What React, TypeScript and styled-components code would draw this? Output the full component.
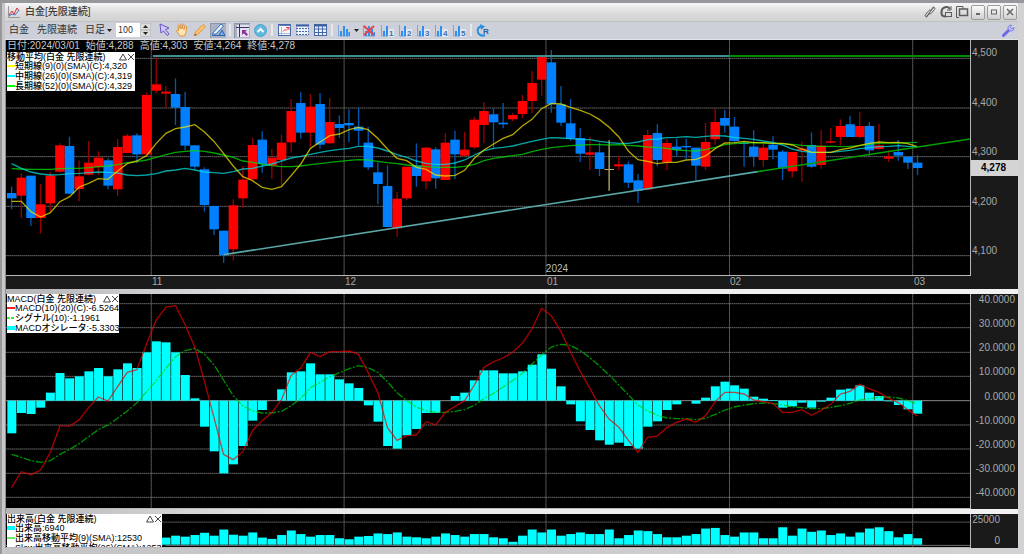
import React from 'react';
import styled, { createGlobalStyle } from 'styled-components';

const GlobalStyle = createGlobalStyle`
  * { box-sizing: border-box; }
  body {
    margin: 0;
    background: #c4c4c6;
    font-family: 'Liberation Sans', 'Noto Sans CJK JP', sans-serif;
    font-size: 10px;
    line-height: 12px;
  }
  button, input, select { font: inherit; color: inherit; margin: 0; padding: 0; border: 0; background: none; }
`;

/* ---------- chart data (chart units, three per pixel at base size) ---------- */

type Candle = [number, number, number, number, 'R' | 'B' | 'Y'];

const STEP = 28.93;
const centre = (i: number) => 17 + i * STEP;

const CANDLES: Candle[] = [
  [440, 459, 475, 508, 'B'], [400, 413, 467, 535, 'R'], [407, 407, 534, 558, 'B'], [432, 493, 534, 581, 'R'],
  [395, 407, 490, 515, 'R'], [310, 316, 395, 398, 'R'], [290, 318, 461, 463, 'B'], [361, 409, 447, 484, 'R'],
  [304, 368, 404, 406, 'R'], [334, 353, 382, 405, 'R'], [355, 361, 437, 448, 'B'], [297, 321, 448, 468, 'R'],
  [282, 287, 339, 339, 'R'], [280, 286, 343, 370, 'B'], [157, 165, 343, 345, 'R'], [52, 133, 152, 160, 'R'],
  [138, 155, 161, 204, 'R'], [115, 162, 203, 255, 'B'], [155, 201, 317, 331, 'B'], [316, 316, 380, 388, 'B'],
  [382, 388, 495, 515, 'B'], [497, 498, 568, 585, 'B'], [572, 572, 646, 669, 'B'], [478, 496, 628, 662, 'R'],
  [378, 419, 475, 503, 'R'], [294, 315, 418, 418, 'R'], [274, 299, 372, 398, 'B'], [327, 353, 377, 417, 'R'],
  [284, 308, 360, 437, 'R'], [178, 213, 307, 338, 'R'], [157, 189, 278, 296, 'B'], [162, 200, 278, 320, 'R'],
  [159, 192, 314, 326, 'B'], [174, 246, 310, 310, 'R'], [226, 252, 264, 293, 'B'], [208, 249, 256, 306, 'B'],
  [202, 260, 272, 317, 'B'], [261, 308, 382, 390, 'B'], [367, 397, 432, 493, 'B'], [376, 438, 561, 561, 'B'],
  [456, 476, 565, 590, 'R'], [380, 380, 475, 481, 'R'], [310, 376, 408, 440, 'B'], [322, 323, 424, 448, 'R'],
  [322, 328, 415, 446, 'B'], [280, 308, 420, 421, 'R'], [272, 299, 343, 417, 'B'], [276, 329, 347, 347, 'R'],
  [230, 239, 322, 327, 'R'], [186, 213, 255, 310, 'R'], [205, 223, 247, 326, 'B'], [189, 248, 253, 265, 'B'],
  [219, 225, 238, 244, 'R'], [165, 183, 222, 234, 'R'], [93, 129, 183, 219, 'R'], [45, 45, 119, 167, 'R'],
  [30, 67, 193, 218, 'B'], [138, 193, 248, 257, 'B'], [177, 250, 296, 302, 'B'], [264, 294, 341, 366, 'B'],
  [290, 337, 344, 391, 'R'], [308, 337, 387, 408, 'B'], [301, 387, 390, 452, 'Y'], [347, 373, 379, 391, 'R'],
  [364, 373, 428, 444, 'B'], [402, 421, 452, 489, 'B'], [270, 285, 448, 448, 'R'], [253, 279, 360, 379, 'B'],
  [298, 309, 367, 391, 'R'], [296, 320, 329, 349, 'B'], [296, 318, 322, 357, 'B'], [323, 323, 377, 420, 'B'],
  [249, 306, 380, 390, 'R'], [204, 246, 298, 314, 'R'], [210, 234, 257, 278, 'B'], [231, 260, 303, 306, 'B'],
  [303, 308, 312, 380, 'B'], [270, 320, 350, 380, 'B'], [312, 323, 360, 380, 'R'], [289, 314, 329, 358, 'B'],
  [330, 335, 386, 420, 'B'], [335, 336, 394, 413, 'R'], [304, 326, 332, 425, 'R'], [277, 315, 380, 384, 'B'],
  [270, 317, 375, 386, 'R'], [263, 304, 308, 310, 'R'], [238, 258, 291, 317, 'R'], [227, 253, 291, 291, 'B'],
  [215, 258, 291, 295, 'R'], [246, 258, 331, 348, 'B'], [251, 316, 327, 329, 'R'], [331, 350, 356, 366, 'R'],
  [299, 336, 347, 362, 'B'], [350, 350, 368, 387, 'B'], [346, 368, 384, 405, 'B'],
];

const SHORT_MA = [
  484, 484, 515, 531, 518, 485, 470, 441, 430, 416, 418, 393, 371, 363, 347, 310, 280, 266, 261, 254, 276, 305, 340, 378,
  410, 422, 442, 448, 440, 407, 372, 325, 306, 287, 282, 269, 262, 269, 295, 327, 355, 362, 382, 388, 405, 408, 406, 391, 355,
  330, 312, 295, 284, 258, 238, 206, 190, 192, 202, 211, 222, 239, 262, 291, 334, 359, 364, 371, 367, 367, 360,
  358, 348, 326, 309, 308, 304, 308, 308, 310, 310, 315, 327, 337, 337, 337, 329, 324, 316, 310, 306, 308, 307, 311, 320,
];
const MIDDLE_MA = [
  371, 385, 396, 402, 405, 404, 401, 400, 398, 396, 397, 399, 405, 407, 405, 401, 393, 390, 385, 390, 396, 398, 400, 395,
  387, 385, 378, 372, 363, 354, 349, 343, 337, 332, 328, 325, 319, 319, 324, 333, 344, 352, 363, 370, 373, 373, 369, 360, 345,
  332, 325, 322, 318, 311, 304, 298, 293, 294, 296, 298, 299, 304, 308, 310, 310, 306, 299, 297, 293, 292, 290,
  292, 289, 287, 288, 292, 295, 298, 303, 307, 315, 327, 334, 337, 337, 337, 334, 331, 326, 323, 320, 319, 317, 319, 320,
];
const LONG_MA = [
  386, 387, 388, 388, 388, 386, 385, 385, 383, 380, 378, 374, 368, 365, 360, 352, 344, 337, 334, 332, 334, 339, 345, 352,
  363, 367, 372, 377, 380, 380, 378, 374, 371, 367, 364, 361, 359, 360, 364, 368, 371, 375, 378, 380, 382, 382, 382, 379, 373,
  362, 355, 351, 347, 343, 335, 328, 323, 320, 317, 315, 314, 314, 315, 314, 316, 318, 321, 322, 325, 330, 332,
  333, 329, 322, 314, 311, 309, 308, 309, 310, 311, 313, 316, 318, 319, 319, 320, 319, 317, 313, 310, 309, 309, 308, 307,
];

const OSCILLATOR = [
  445, 384, 387, 368, 323, 264, 280, 274, 259, 249, 274, 253, 235, 249, 202, 169, 172, 202, 270, 340, 425, 499, 565, 538,
  483, 407, 375, 347, 313, 262, 259, 235, 268, 268, 283, 295, 309, 361, 410, 483, 491, 451, 432, 384, 384, 347, 333, 323,
  286, 256, 256, 265, 265, 259, 239, 208, 251, 304, 358, 409, 435, 466, 479, 473, 483, 491, 425, 409, 375, 358, 347, 356,
  338, 304, 290, 301, 311, 335, 341, 345, 368, 364, 353, 368, 350, 338, 314, 311, 301, 323, 333, 349, 360, 373, 386,
].map((v) => v - 27);
const MACD = [
  608, 560, 569, 555, 502, 422, 424, 404, 368, 336, 348, 305, 262, 254, 177, 105, 66, 62, 120, 187, 290, 400, 508, 524,
  500, 437, 407, 383, 344, 271, 249, 202, 215, 200, 200, 198, 208, 263, 322, 428, 466, 452, 450, 410, 420, 382, 364, 347,
  300, 247, 230, 219, 202, 175, 132, 70, 92, 140, 202, 260, 310, 363, 403, 427, 467, 502, 457, 453, 428, 412, 402, 412,
  392, 350, 322, 322, 327, 345, 350, 355, 382, 382, 374, 391, 376, 358, 327, 319, 298, 312, 322, 340, 353, 374, 393,
].map((v) => v - 27);
const SIGNAL = [
  508, 517, 527, 532, 527, 508, 493, 476, 455, 434, 420, 400, 378, 353, 320, 287, 250, 215, 197, 190, 208, 240, 285, 332,
  363, 378, 384, 384, 379, 362, 340, 308, 292, 276, 263, 251, 242, 248, 262, 290, 323, 347, 366, 377, 382, 382, 379, 374,
  361, 340, 325, 306, 287, 265, 237, 210, 186, 178, 181, 197, 218, 243, 270, 300, 330, 360, 378, 391, 399, 401, 401, 404,
  400, 388, 375, 366, 360, 356, 354, 356, 360, 365, 368, 371, 371, 367, 362, 355, 345, 341, 337, 336, 339, 347, 356,
].map((v) => v - 27);
const VOLUME = [
  752, 755, 750, 757, 748, 752, 744, 756, 752, 750, 755, 748, 757, 752, 756, 755, 760, 754, 757, 752, 745, 754, 735, 751,
  754, 744, 760, 764, 752, 738, 749, 757, 752, 752, 762, 765, 757, 755, 747, 749, 744, 757, 759, 762, 757, 747, 752, 757,
  749, 749, 759, 762, 773, 754, 735, 744, 735, 754, 749, 744, 749, 749, 735, 762, 752, 738, 740, 749, 759, 759, 754, 749,
  732, 730, 752, 757, 744, 744, 762, 762, 728, 754, 732, 742, 738, 752, 747, 757, 744, 732, 728, 740, 759, 749, 762,
].map((v) => v - 687);

const MONTH_LINES = [436, 1015, 1621, 2172, 2722];
const PLOT_W = 2894;

const toPoints = (values: number[]) => values.map((v, i) => `${Math.round(centre(i))},${v}`).join(' ');

/* ---------- window frame ---------- */

const Window = styled.main`
  display: flex;
  flex-direction: column;
  min-height: 100vh;
  border-top: 3px solid #96989c;
  border-left: 2px solid #98989a;
  padding: 0 6px 6px 3px;
  background: linear-gradient(90deg, #c9c9cb, #c4c4c6 4px, #d2d2d4);
`;

const TitleBar = styled.header`
  display: flex;
  align-items: center;
  height: 18px;
  padding: 0 1px 0 3px;
  gap: 5px;
  background: linear-gradient(#f6f6f6, #dadada 60%, #d2d2d2);
`;

const Title = styled.h1`
  flex: 1;
  margin: 0;
  font-size: 10px;
  line-height: 12px;
  font-weight: 500;
  color: #3a3a3a;
`;

const TitleTools = styled.div`
  display: flex;
  align-items: center;
  gap: 2px;
`;

const PlainTool = styled.button`
  display: flex;
  width: 14px;
  height: 14px;
  color: #5c5c5c;
`;

const FrameButton = styled.button`
  display: flex;
  align-items: center;
  justify-content: center;
  width: 14px;
  height: 15px;
  border: 1px solid #9c9c9c;
  border-radius: 2px;
  background: linear-gradient(#fafafa, #cfcfcf);
  color: #666;
`;

const Toolbar = styled.nav`
  display: flex;
  align-items: center;
  height: 19px;
  padding: 0 2px 1px 4px;
  gap: 2px;
  background: #cdd0d9;
  border-top: 1px solid #bfc1c6;
  border-bottom: 1px solid #e4e5ea;
  color: #333;
`;

const TextTool = styled.button`
  margin-right: 6px;
  white-space: nowrap;
`;

const PeriodSelect = styled.select`
  appearance: none;
  width: 20px;
  line-height: 12px;
`;

const CountBox = styled.div`
  display: flex;
  width: 35px;
  height: 14px;
  margin: 0 3px 0 2px;
  background: #fff;
`;

const CountInput = styled.input`
  width: 24px;
  padding-left: 2px;
  background: #fff;
  font-family: 'Liberation Sans Narrow', 'Noto Sans CJK JP', sans-serif;
  font-size: 9px;
`;

const Spinner = styled.div`
  display: flex;
  flex-direction: column;
  flex: 1;
  background: #dcdcdc;
`;

const SpinButton = styled.button`
  display: flex;
  flex: 1;
  align-items: center;
  justify-content: center;
  border: 1px solid #c4c4c4;
`;

const IconTool = styled.button<{ $pressed?: boolean }>`
  display: flex;
  align-items: center;
  justify-content: center;
  width: 16px;
  height: 15px;
  flex: none;
  background: ${(p) => (p.$pressed ? '#a9b1c2' : 'none')};
  box-shadow: ${(p) => (p.$pressed ? 'inset 1px 1px 0 #8d95a8' : 'none')};
`;

const Divider = styled.span`
  width: 2px;
  height: 12px;
  margin: 0 1px;
  background: #e6e8ee;
`;

const Spacer = styled.span`
  flex: 1;
`;

/* ---------- chart panels ---------- */

const Panels = styled.section`
  display: grid;
  flex: 1;
  grid-template-rows: 249fr 215fr 34fr;
  gap: 5px;
  background: linear-gradient(90deg, #b4b4b6, #e9e9eb 30%, #f2f2f3);
  border-left: 1px solid #8f8f91;
`;

const Panel = styled.article`
  display: grid;
  grid-template-columns: minmax(0, 1fr) 47px;
  min-height: 0;
  background: #1a1a1a;
  overflow: hidden;
`;

const PlotColumn = styled.div`
  display: flex;
  flex-direction: column;
  min-height: 0;
`;

const Plot = styled.div`
  position: relative;
  flex: 1;
  min-height: 0;
  background: #000;
  border-right: 1px solid #b8b8b8;
  border-bottom: 1px solid #b8b8b8;
  overflow: hidden;
`;

const ChartSvg = styled.svg`
  position: absolute;
  inset: 0;
  width: 100%;
  height: 100%;
`;

const Quote = styled.p`
  position: absolute;
  left: 1px;
  top: 0;
  display: flex;
  gap: 6px;
  margin: 0;
  color: #c8c8c8;
  white-space: nowrap;
`;

const Legend = styled.div<{ $top: number; $width: number }>`
  position: absolute;
  left: 1px;
  top: ${(p) => p.$top}px;
  width: ${(p) => p.$width}px;
  background: #fff;
  color: #000;
  font-size: 9px;
  font-weight: 500;
  line-height: 10px;
  white-space: nowrap;
`;

const LegendHead = styled.div`
  display: flex;
  align-items: center;
  height: 9px;
`;

const LegendName = styled.span`
  flex: 1;
`;

const LegendButton = styled.button`
  display: flex;
  width: 8px;
  height: 8px;
`;

const LegendRow = styled.div`
  display: flex;
  align-items: center;
  height: 10px;
`;

const Swatch = styled.span<{ $color: string; $kind?: 'dash' | 'bar' }>`
  flex: none;
  width: 8px;
  height: ${(p) => (p.$kind === 'bar' ? 4 : 2)}px;
  background: ${(p) =>
    p.$kind === 'dash' ? `repeating-linear-gradient(90deg, ${p.$color} 0 3px, #fff 3px 4px)` : p.$color};
`;

const YearMark = styled.span`
  position: absolute;
  left: 56%;
  bottom: 0;
  color: #bbb;
`;

const MonthAxis = styled.div`
  display: grid;
  grid-template-columns: 146fr 193fr 202fr 183fr 184fr 57fr;
  height: 13px;
  line-height: 11px;
  color: #a8a8a8;
`;

const ValueAxis = styled.div<{ $top: number; $bottom: number; $right?: number }>`
  position: relative;
  display: flex;
  flex-direction: column;
  justify-content: space-between;
  align-items: ${(p) => (p.$right === undefined ? 'flex-start' : 'flex-end')};
  padding: ${(p) => `${p.$top}px ${p.$right ?? 0}px ${p.$bottom}px 1px`};
  color: #a8a8a8;
`;

const LastPrice = styled.strong`
  position: absolute;
  left: 0;
  right: 0;
  top: 48.2%;
  height: 16px;
  padding-left: 10px;
  background: #d4d4d4;
  color: #000;
  line-height: 16px;
`;

/* ---------- toolbar drawings ---------- */

const BarsIcon = ({ mark, cross }: { mark?: string; cross?: boolean }) => (
  <svg width="14" height="13" viewBox="0 0 14 13">
    <path d="M1.5 1v11H13" stroke="#7fa6d8" fill="none" />
    <path d="M3 12V7h2v5zM6 12V2h2v10zM9 12V5h2v7zM11.500 12V8h1.500v4z" fill="#2f8ef0" />
    {mark && <rect x="8" y="5" width="6" height="8" fill="#dfe6f2" />}
    {mark && <text x="9" y="12" fontSize="8" fontWeight="700" fill="#3f6fae" fontFamily="Liberation Sans, sans-serif">{mark}</text>}
    {cross && <path d="M2 2l10 9M12 2L2 11" stroke="#e8434a" strokeWidth="2" />}
  </svg>
);

const GridIcon = ({ dotted }: { dotted?: boolean }) => (
  <svg width="13" height="12" viewBox="0 0 13 12">
    <rect x="0.500" y="0.500" width="12" height="11" fill="#eef3fb" stroke={dotted ? '#a9bbdc' : '#4667a8'} />
    <path d="M0 1.500h13" stroke="#3b5c9e" strokeWidth="2" />
    {dotted
      ? <path d="M0 4.500h13M0 7.500h13M0 10.500h13" stroke="#4667a8" strokeDasharray="2 1" />
      : <path d="M0 5h13M0 8.500h13M4.500 0v12M8.500 0v12" stroke="#4667a8" />}
  </svg>
);

const TOOL_DRAWINGS = {
  pointer: (
    <svg width="13" height="14" viewBox="0 0 13 14">
      <path d="M2 1l9 4-3.500 1.500L11 11l-2 1.500-3.500-4.500L3 10z" fill="#cfc8f6" stroke="#6a55c0" />
    </svg>
  ),
  hand: (
    <svg width="14" height="14" viewBox="0 0 14 14">
      <path d="M5 13L1.500 8c0-1 1-1.300 2-.3L3 3c0-1 1.300-1 1.500 0L5 6l.3-4.500c.2-1 1.400-1 1.500 0L7 6l.8-4c.3-1 1.500-.7 1.400.3L9 6.500l1.300-3c.5-.8 1.600-.3 1.400.6L11 9.500 9.500 13z" fill="#ffe3b0" stroke="#dd9440" />
    </svg>
  ),
  pencil: (
    <svg width="14" height="14" viewBox="0 0 14 14">
      <path d="M1.500 12.500l1-3.500L10 1.500l2.500 2.200L5 11.300z" fill="#ffc36b" stroke="#df9440" />
      <path d="M1 13l1-2.500L3.500 12z" fill="#8a5a30" />
    </svg>
  ),
  draw: (
    <svg width="15" height="14" viewBox="0 0 15 14">
      <path d="M1 11L10 1l2.500 2L5 11z" fill="#e9f1fc" stroke="#3571b8" />
      <path d="M1 12.500h8" stroke="#2d65b5" />
      <path d="M8 12.500l3-5.500 3 5.500z" stroke="#2d65b5" fill="#78a8e6" />
    </svg>
  ),
  cross: (
    <svg width="13" height="13" viewBox="0 0 13 13">
      <rect x="1" y="1" width="12" height="12" fill="#e5e2ef" />
      <path d="M3.500 0v13M0 3.500h13" stroke="#3d2f73" />
      <path d="M6 6h5l-1.700 1.700L12 10.500 10.500 12 7.700 9.300 6 11z" fill="#87329a" />
    </svg>
  ),
  up: (
    <svg width="13" height="13" viewBox="0 0 13 13">
      <circle cx="6.500" cy="6.500" r="6" fill="#5fb9e0" stroke="#4ba3cc" />
      <path d="M3.500 8l3-3 3 3" stroke="#fff" strokeWidth="2" fill="none" />
    </svg>
  ),
  panel: (
    <svg width="13" height="12" viewBox="0 0 13 12">
      <rect x="0.500" y="0.500" width="12" height="11" fill="#f7f8fc" stroke="#4667a8" />
      <path d="M0 1.500h13" stroke="#5d7fc0" />
      <path d="M3.500 3v8M1 9.500h11" stroke="#a9bbdc" />
      <path d="M5 7.500l2-2 1 1 3-3M8 3.500h3V6" stroke="#e8434a" fill="none" />
    </svg>
  ),
  refresh: (
    <svg width="14" height="13" viewBox="0 0 14 13">
      <path d="M5 2.500C1 3 1 8 3 10s4 2 6 1" stroke="#2a8fdc" strokeWidth="2" fill="none" />
      <path d="M4 0l5 2.500L5 6z" fill="#2a8fdc" />
      <text x="7" y="10" fontSize="8" fontWeight="700" fill="#245fae" fontFamily="Liberation Sans, sans-serif">R</text>
    </svg>
  ),
  wrench: (
    <svg width="13" height="13" viewBox="0 0 13 13">
      <path d="M1.500 11.500l5-5" stroke="#6c66ea" strokeWidth="3" strokeLinecap="round" />
      <path d="M9.500 1.200C7 .8 5.300 3 6.300 5.200L8 6.800c2.200.8 4.300-.8 4-3.300L10 5 8.300 3.500z" fill="#c3c4f8" stroke="#7b78e8" />
    </svg>
  ),
};

const Caret = () => (
  <svg width="5" height="3" viewBox="0 0 5 3" aria-hidden="true"><path d="M0 0h5L2.500 3z" fill="#222" /></svg>
);

const LegendControls = () => (
  <>
    <LegendButton aria-label="折りたたむ">
      <svg width="8" height="8" viewBox="0 0 8 8"><path d="M4 1L7.500 7h-7z" stroke="#444" fill="none" /></svg>
    </LegendButton>
    <LegendButton aria-label="閉じる">
      <svg width="8" height="8" viewBox="0 0 8 8"><path d="M1 1l6 6M7 1L1 7" stroke="#444" /></svg>
    </LegendButton>
  </>
);

/* ---------- chart drawings ---------- */

const GridLines = ({ rows, height }: { rows: number[]; height: number }) => (
  <g stroke="#646464" strokeWidth="3">
    {rows.map((y) => <path key={y} d={`M0 ${y}H${PLOT_W}`} strokeDasharray="5 1" />)}
    {MONTH_LINES.map((x) => <path key={x} d={`M${x} 0V${height}`} strokeDasharray="5 1" />)}
  </g>
);

const BODY = { R: '#ff0000', B: '#0080ff', Y: '#b8b060' };
const WICK = { R: '#990000', B: '#0058b0', Y: '#b8b060' };

const PriceChart = () => (
  <ChartSvg viewBox={`0 0 ${PLOT_W} 705`} preserveAspectRatio="none" role="img" aria-label="ローソク足">
    <GridLines rows={[55, 204, 350, 499, 647]} height={705} />
    {CANDLES.map(([high, top, bottom, low, tone], i) => {
      const x = centre(i);
      return (
        <g key={i}>
          <path d={`M${x} ${high}V${low}`} stroke={WICK[tone]} strokeWidth="4" />
          <rect x={x - 14} y={top} width="28.500" height={Math.max(bottom - top, 3)} fill={BODY[tone]} />
        </g>
      );
    })}
    <g fill="none" strokeWidth="4" strokeOpacity="0.75">
      <polyline points={toPoints(LONG_MA)} stroke="#00dd00" />
      <polyline points={toPoints(MIDDLE_MA)} stroke="#00dddd" />
      <polyline points={toPoints(SHORT_MA)} stroke="#eedd00" />
    </g>
    <g fill="none" strokeWidth="5">
      <path d="M441 48H2172" stroke="#3f8f8f" strokeWidth="6" />
      <path d="M2172 48H2894" stroke="#008a00" strokeWidth="6" />
      <path d="M654 644L2257 395" stroke="#5aa8a8" />
      <path d="M2257 395L2894 297" stroke="#00a000" />
    </g>
  </ChartSvg>
);

const MacdChart = () => (
  <ChartSvg viewBox={`0 0 ${PLOT_W} 642`} preserveAspectRatio="none" role="img" aria-label="MACD">
    <GridLines rows={[29, 101, 175, 247, 393, 465, 538, 610]} height={642} />
    <path d={`M0 320H${PLOT_W}`} stroke="#8a8a8a" strokeWidth="3" />
    {OSCILLATOR.map((v, i) => (
      <rect key={i} x={centre(i) - 13} y={Math.min(v, 320)} width="27" height={Math.abs(v - 320)} fill="#00ffff" />
    ))}
    <g fill="none" strokeWidth="4" strokeOpacity="0.7">
      <polyline points={toPoints(SIGNAL)} stroke="#00cc00" strokeDasharray="22 5 6 5" />
      <polyline points={toPoints(MACD)} stroke="#ee0000" />
    </g>
  </ChartSvg>
);

const VolumeChart = () => (
  <ChartSvg viewBox={`0 0 ${PLOT_W} 102`} preserveAspectRatio="none" role="img" aria-label="出来高">
    <GridLines rows={[25]} height={102} />
    {VOLUME.map((v, i) => (
      <rect key={i} x={centre(i) - 13} y={v} width="27" height={95 - v} fill="#00ffff" />
    ))}
    <path d={`M0 97H${PLOT_W}`} stroke="#707070" strokeWidth="3" />
  </ChartSvg>
);

export default function App() {
  return (
    <>
      <GlobalStyle />
      <Window>
        <TitleBar>
          <svg width="12" height="12" viewBox="0 0 12 12" aria-hidden="true">
            <path d="M0.500 0v11.500H12" stroke="#999" fill="none" />
            <path d="M1 9l3-4 2 3 3-6 2 3" stroke="#d8343c" fill="none" />
            <path d="M1 10l3-2 3 1 4-5" stroke="#4b74c8" fill="none" />
          </svg>
          <Title>白金[先限連続]</Title>
          <TitleTools>
            <PlainTool aria-label="リンク">
              <svg width="14" height="14" viewBox="0 0 14 14" fill="none" stroke="currentColor">
                <path d="M6 8.500L4 11c-1.500 1-2.500 0-1.500-1.500L6 5.500c1-1 2-.5 2 .5M8 5.500L10 3c1.500-1 2.500 0 1.500 1.500L8 8.500c-1 1-2 .5-2-.5M3.500 12.500l7-11" />
              </svg>
            </PlainTool>
            <PlainTool aria-label="更新">
              <svg width="14" height="14" viewBox="0 0 14 14" fill="none" stroke="currentColor">
                <path d="M11 4C9 1 3 1.500 2.500 6.500S5 11.500 7 11.500" strokeWidth="2" />
                <path d="M12 1v4H8" />
                <rect x="6.500" y="7.500" width="6" height="4" />
              </svg>
            </PlainTool>
            <PlainTool aria-label="別ウィンドウ">
              <svg width="14" height="14" viewBox="0 0 14 14" fill="none" stroke="currentColor">
                <path d="M4 12.500H1.500v-11H8V4" />
                <rect x="4.500" y="4" width="8" height="6.500" strokeWidth="1.500" />
              </svg>
            </PlainTool>
            <FrameButton aria-label="最小化">
              <svg width="8" height="8" viewBox="0 0 8 8"><path d="M2 6h4" stroke="currentColor" strokeWidth="2" /></svg>
            </FrameButton>
            <FrameButton aria-label="最大化">
              <svg width="8" height="8" viewBox="0 0 8 8"><rect x="1.500" y="2" width="5" height="4" fill="none" stroke="currentColor" /></svg>
            </FrameButton>
            <FrameButton aria-label="閉じる">
              <svg width="8" height="8" viewBox="0 0 8 8"><path d="M1 1l6 6M7 1L1 7" stroke="currentColor" strokeWidth="1.500" /></svg>
            </FrameButton>
          </TitleTools>
        </TitleBar>

        <Toolbar>
          <TextTool>白金</TextTool>
          <TextTool>先限連続</TextTool>
          <PeriodSelect aria-label="足種" defaultValue="日足">
            <option>日足</option>
          </PeriodSelect>
          <Caret />
          <CountBox>
            <CountInput aria-label="表示本数" defaultValue="100" />
            <Spinner>
              <SpinButton aria-label="増やす">
                <svg width="5" height="3" viewBox="0 0 5 3"><path d="M0 3h5L2.500 0z" fill="#222" /></svg>
              </SpinButton>
              <SpinButton aria-label="減らす"><Caret /></SpinButton>
            </Spinner>
          </CountBox>
          <IconTool aria-label="選択">{TOOL_DRAWINGS.pointer}</IconTool>
          <IconTool aria-label="移動">{TOOL_DRAWINGS.hand}</IconTool>
          <IconTool aria-label="ペン">{TOOL_DRAWINGS.pencil}</IconTool>
          <IconTool aria-label="描画" $pressed>{TOOL_DRAWINGS.draw}</IconTool>
          <Divider />
          <IconTool aria-label="十字カーソル" $pressed>{TOOL_DRAWINGS.cross}</IconTool>
          <IconTool aria-label="上へ">{TOOL_DRAWINGS.up}</IconTool>
          <Divider />
          <IconTool aria-label="チャート設定">{TOOL_DRAWINGS.panel}</IconTool>
          <IconTool aria-label="横罫線"><GridIcon dotted /></IconTool>
          <IconTool aria-label="罫線"><GridIcon /></IconTool>
          <Divider />
          <IconTool aria-label="テクニカル"><BarsIcon /></IconTool>
          <Caret />
          <IconTool aria-label="テクニカル削除"><BarsIcon cross /></IconTool>
          {['1', '2', '3', '4', '5'].map((n) => (
            <IconTool key={n} aria-label={`テクニカル${n}`}><BarsIcon mark={n} /></IconTool>
          ))}
          <Divider />
          <IconTool aria-label="再読込">{TOOL_DRAWINGS.refresh}</IconTool>
          <Spacer />
          <IconTool aria-label="設定">{TOOL_DRAWINGS.wrench}</IconTool>
        </Toolbar>

        <Panels>
          <Panel>
            <PlotColumn>
              <Plot>
                <PriceChart />
                <Quote>
                  <span>日付:2024/03/01</span>
                  <span>始値:4,288</span>
                  <span>高値:4,303</span>
                  <span>安値:4,264</span>
                  <span>終値:4,278</span>
                </Quote>
                <Legend $top={12} $width={128}>
                  <LegendHead>
                    <LegendName>移動平均(白金 先限連続)</LegendName>
                    <LegendControls />
                  </LegendHead>
                  <LegendRow><Swatch $color="#ffff00" />短期線(9)(0)(SMA)(C):4,320</LegendRow>
                  <LegendRow><Swatch $color="#00ffff" />中期線(26)(0)(SMA)(C):4,319</LegendRow>
                  <LegendRow><Swatch $color="#00ff00" />長期線(52)(0)(SMA)(C):4,329</LegendRow>
                </Legend>
                <YearMark>2024</YearMark>
              </Plot>
              <MonthAxis>
                <span />
                <span>11</span>
                <span>12</span>
                <span>01</span>
                <span>02</span>
                <span>03</span>
              </MonthAxis>
            </PlotColumn>
            <ValueAxis $top={7} $bottom={32}>
              {['4,500', '4,400', '4,300', '4,200', '4,100'].map((v) => <span key={v}>{v}</span>)}
              <LastPrice>4,278</LastPrice>
            </ValueAxis>
          </Panel>

          <Panel>
            <PlotColumn>
              <Plot>
                <MacdChart />
                <Legend $top={0} $width={112}>
                  <LegendHead>
                    <LegendName>MACD(白金 先限連続)</LegendName>
                    <LegendControls />
                  </LegendHead>
                  <LegendRow><Swatch $color="#ee2222" />MACD(10)(20)(C):-6.5264</LegendRow>
                  <LegendRow><Swatch $color="#33ee33" $kind="dash" />シグナル(10):-1.1961</LegendRow>
                  <LegendRow><Swatch $color="#00ffff" $kind="bar" />MACDオシレータ:-5.3303</LegendRow>
                </Legend>
              </Plot>
            </PlotColumn>
            <ValueAxis $top={0} $bottom={10} $right={3}>
              {['40.0000', '30.0000', '20.0000', '10.0000', '0.0000', '-10.0000', '-20.0000', '-30.0000', '-40.0000'].map((v) => (
                <span key={v}>{v}</span>
              ))}
            </ValueAxis>
          </Panel>

          <Panel>
            <PlotColumn>
              <Plot>
                <VolumeChart />
                <Legend $top={0} $width={155}>
                  <LegendHead>
                    <LegendName>出来高(白金 先限連続)</LegendName>
                    <LegendControls />
                  </LegendHead>
                  <LegendRow><Swatch $color="#00ffff" $kind="bar" />出来高:6940</LegendRow>
                  <LegendRow><Swatch $color="#66ee66" />出来高移動平均(9)(SMA):12530</LegendRow>
                  <LegendRow><Swatch $color="#ee77ee" $kind="dash" />Slow出来高移動平均(26)(SMA):12530</LegendRow>
                </Legend>
              </Plot>
            </PlotColumn>
            <ValueAxis $top={0} $bottom={1} $right={18}>
              <span>25000</span>
              <span>0</span>
            </ValueAxis>
          </Panel>
        </Panels>
      </Window>
    </>
  );
}
